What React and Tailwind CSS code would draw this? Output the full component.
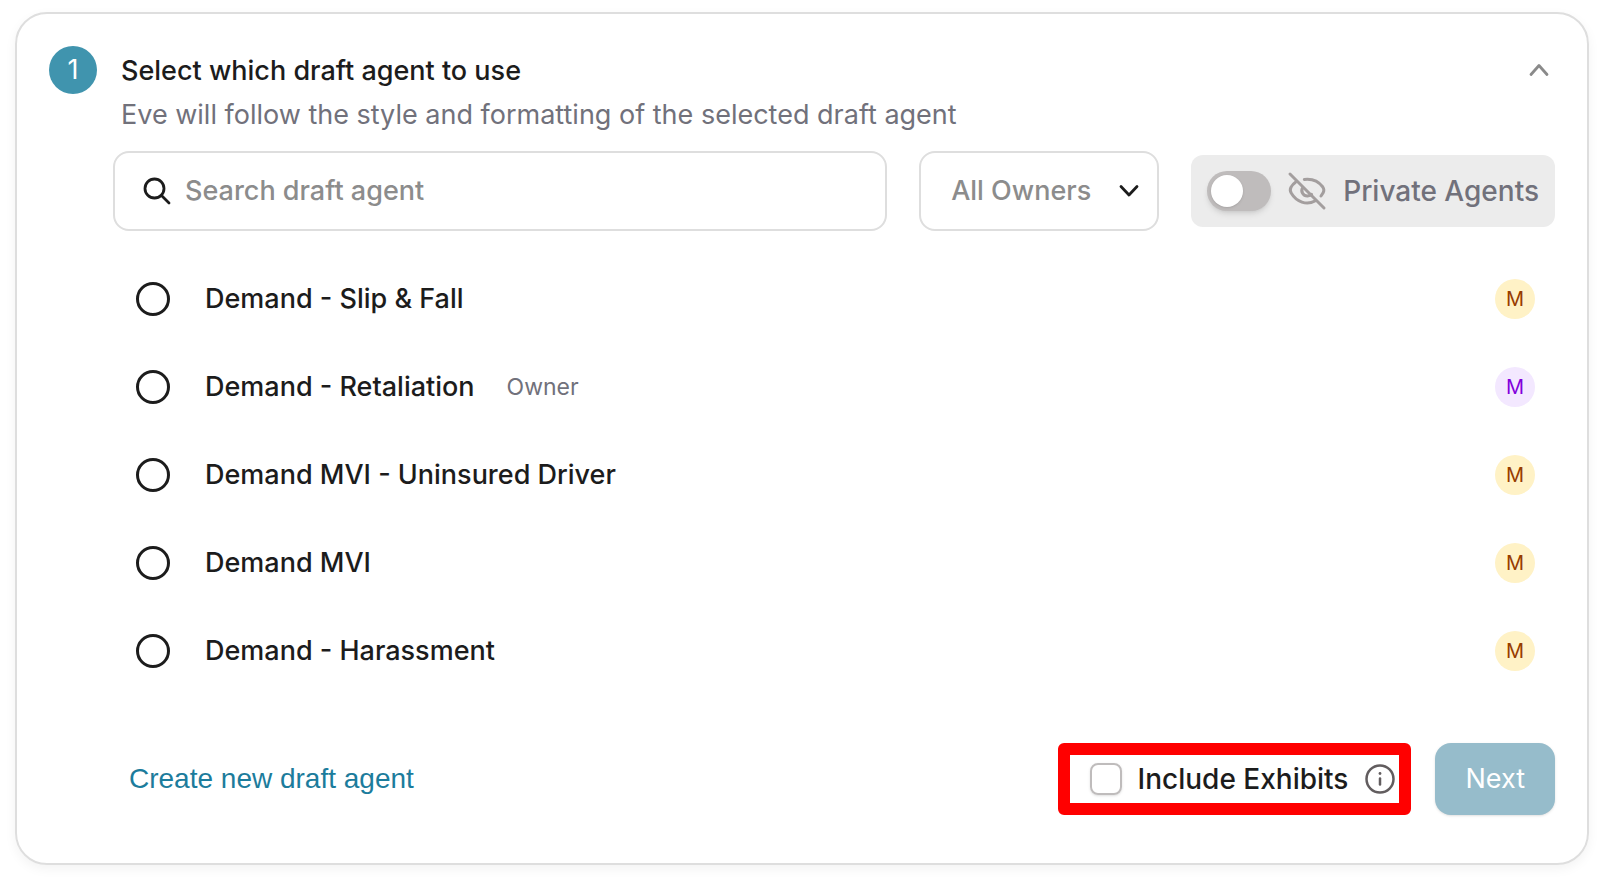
import { useState } from 'react';

const agents = [
    { id: 'slip-fall', name: 'Demand - Slip & Fall', initial: 'M', avatar: 'bg-[#fff2c6] text-[#973c00]' },
    { id: 'retaliation', name: 'Demand - Retaliation', owned: true, initial: 'M', avatar: 'bg-[#f3e8ff] text-[#8200db]' },
    { id: 'mvi-uninsured', name: 'Demand MVI - Uninsured Driver', initial: 'M', avatar: 'bg-[#fff2c6] text-[#973c00]' },
    { id: 'mvi', name: 'Demand MVI', initial: 'M', avatar: 'bg-[#fff2c6] text-[#973c00]' },
    { id: 'harassment', name: 'Demand - Harassment', initial: 'M', avatar: 'bg-[#fff2c6] text-[#973c00]' },
];

function SearchIcon() {
    return (
        <svg className="size-7 shrink-0" viewBox="0 0 28 28" fill="none" stroke="#1c1c1c" strokeWidth="2.8" strokeLinecap="round" aria-hidden="true">
            <circle cx="11.5" cy="11.5" r="9.5" />
            <path d="M18.5 18.5 26 26" />
        </svg>
    );
}

function ChevronIcon({ className, up }) {
    return (
        <svg className={className} viewBox="0 0 24 24" fill="none" stroke="currentColor" strokeWidth="2.8" strokeLinecap="round" strokeLinejoin="round" aria-hidden="true">
            <path d={up ? 'M4 16.500 12 7.500l8 9' : 'M4 7.500 12 16l8-8.500'} />
        </svg>
    );
}

function EyeOffIcon() {
    return (
        <svg className="size-10 shrink-0" viewBox="0 0 40 40" fill="none" stroke="#a39e9e" strokeWidth="3" strokeLinecap="round" strokeLinejoin="round" aria-hidden="true">
            <path d="M3 3l34 34" />
            <path d="M17.300 8.400c8-.9 14.500 2.100 18.500 7.600 1.300 1.900 1.300 3.800.4 5.700L34 25" />
            <path d="M8.500 11.200c-2 1.400-3.400 3-4.500 5-.9 1.700-.9 4 .2 5.800C9.500 31 19.500 34.500 28 30" />
            <path d="M15.800 16.500c-2.600 3.800.3 8.700 4.900 8.500 1.600-.1 2.900-.6 3.900-1.700" />
        </svg>
    );
}

function InfoIcon() {
    return (
        <svg className="size-[30px]" viewBox="0 0 30 30" fill="none" stroke="#625d5f" strokeLinecap="round" aria-hidden="true">
            <circle cx="15" cy="15" r="13.500" strokeWidth="2.500" />
            <path d="M15 14.500v6" strokeWidth="2.500" />
            <path d="M15 9.500v.1" strokeWidth="2.800" />
        </svg>
    );
}

export default function App() {
    const [query, setQuery] = useState('');
    const [owner, setOwner] = useState('all');
    const [showPrivate, setShowPrivate] = useState(false);
    const [selected, setSelected] = useState(null);
    const [includeExhibits, setIncludeExhibits] = useState(false);

    const visibleAgents = agents.filter(
        (agent) => agent.name.toLowerCase().includes(query.toLowerCase()) && (owner === 'all' || agent.owned)
    );

    return (
        <main className="bg-white px-[15px] py-3 font-['Inter',sans-serif] text-[27px] leading-10 text-[#1c1c1c]">
            <section className="rounded-[32px] border-2 border-[#dedede] p-8 pb-12 shadow-[0_4px_12px_rgba(0,0,0,0.05)]">
                <header className="flex items-start gap-6 pr-1">
                    <span className="flex size-12 shrink-0 items-center justify-center rounded-full bg-[#4094ae] text-white">1</span>
                    <div className="flex-1 pt-[5px]">
                        <h1 className="font-medium">Select which draft agent to use</h1>
                        <p className="pt-1 text-[#71717b]">Eve will follow the style and formatting of the selected draft agent</p>
                    </div>
                    <button type="button" aria-label="Collapse step" className="flex h-12 items-center text-[#8a8a8a]">
                        <ChevronIcon className="size-6" up />
                    </button>
                </header>

                {/* Filters */}
                <div className="mt-4 flex items-center gap-8 pl-16">
                    <label className="flex h-20 flex-1 items-center gap-[14px] rounded-2xl border-2 border-[#dedede] px-7">
                        <SearchIcon />
                        <input
                            type="text"
                            aria-label="Search draft agent"
                            placeholder="Search draft agent"
                            value={query}
                            onChange={(e) => setQuery(e.target.value)}
                            className="min-w-0 flex-1 font-medium outline-none placeholder:text-[#8c8c8c]"
                        />
                    </label>
                    <div className="grid w-60 items-center">
                        <select
                            aria-label="Owner"
                            value={owner}
                            onChange={(e) => setOwner(e.target.value)}
                            className="col-start-1 row-start-1 h-20 appearance-none rounded-2xl border-2 border-[#dedede] pr-14 pl-[30px] font-medium text-[#8c8c8c]"
                        >
                            <option value="all">All Owners</option>
                            <option value="me">Me</option>
                        </select>
                        <ChevronIcon className="pointer-events-none col-start-1 row-start-1 mr-[18px] size-6 justify-self-end" />
                    </div>
                    <label className="flex h-[72px] items-center gap-4 rounded-xl bg-[#ececec] px-4 text-[28px] font-medium text-[#71717b]">
                        <input
                            type="checkbox"
                            role="switch"
                            checked={showPrivate}
                            onChange={(e) => setShowPrivate(e.target.checked)}
                            className="flex h-10 w-16 appearance-none items-center rounded-full bg-[#bfbcbc] p-1 shadow-md before:size-8 before:rounded-full before:bg-white before:shadow-sm checked:justify-end checked:bg-[#4094ae]"
                        />
                        <EyeOffIcon />
                        Private Agents
                    </label>
                </div>

                {/* Agents */}
                <ul className="mt-6 pr-5 pl-[87px]">
                    {visibleAgents.map((agent) => (
                        <li key={agent.id} className="flex h-[88px] items-center">
                            <label className="flex items-center gap-[35px] font-medium">
                                <input
                                    type="radio"
                                    name="agent"
                                    checked={selected === agent.id}
                                    onChange={() => setSelected(agent.id)}
                                    className="size-[34px] appearance-none rounded-full border-3 border-[#1c1c1c] checked:border-10"
                                />
                                {agent.name}
                            </label>
                            {agent.owned && <span className="ml-8 text-[23px] text-[#71717b]">Owner</span>}
                            <span className={`ml-auto flex size-10 items-center justify-center rounded-full text-xl ${agent.avatar}`}>
                                {agent.initial}
                            </span>
                        </li>
                    ))}
                </ul>

                <footer className="mt-12 flex items-center pl-20">
                    <a href="#new" className="font-['Liberation_Sans',sans-serif] text-[28px] text-[#1c7c9c]">Create new draft agent</a>
                    <div className="ml-auto flex h-[72px] items-center gap-[17px] rounded-md border-12 border-[#ff0000] pr-1 pl-5 text-[28px]">
                        <label className="flex items-center gap-4 font-medium">
                            <input
                                type="checkbox"
                                checked={includeExhibits}
                                onChange={(e) => setIncludeExhibits(e.target.checked)}
                                className="size-8 appearance-none rounded-lg border-2 border-[#bfbcbc] shadow-sm checked:bg-[#4094ae]"
                            />
                            Include Exhibits
                        </label>
                        <button type="button" aria-label="About exhibits">
                            <InfoIcon />
                        </button>
                    </div>
                    <button type="button" className="ml-6 h-[72px] rounded-2xl bg-[#96bccb] px-[30px] text-white shadow-sm">Next</button>
                </footer>
            </section>
        </main>
    );
}
